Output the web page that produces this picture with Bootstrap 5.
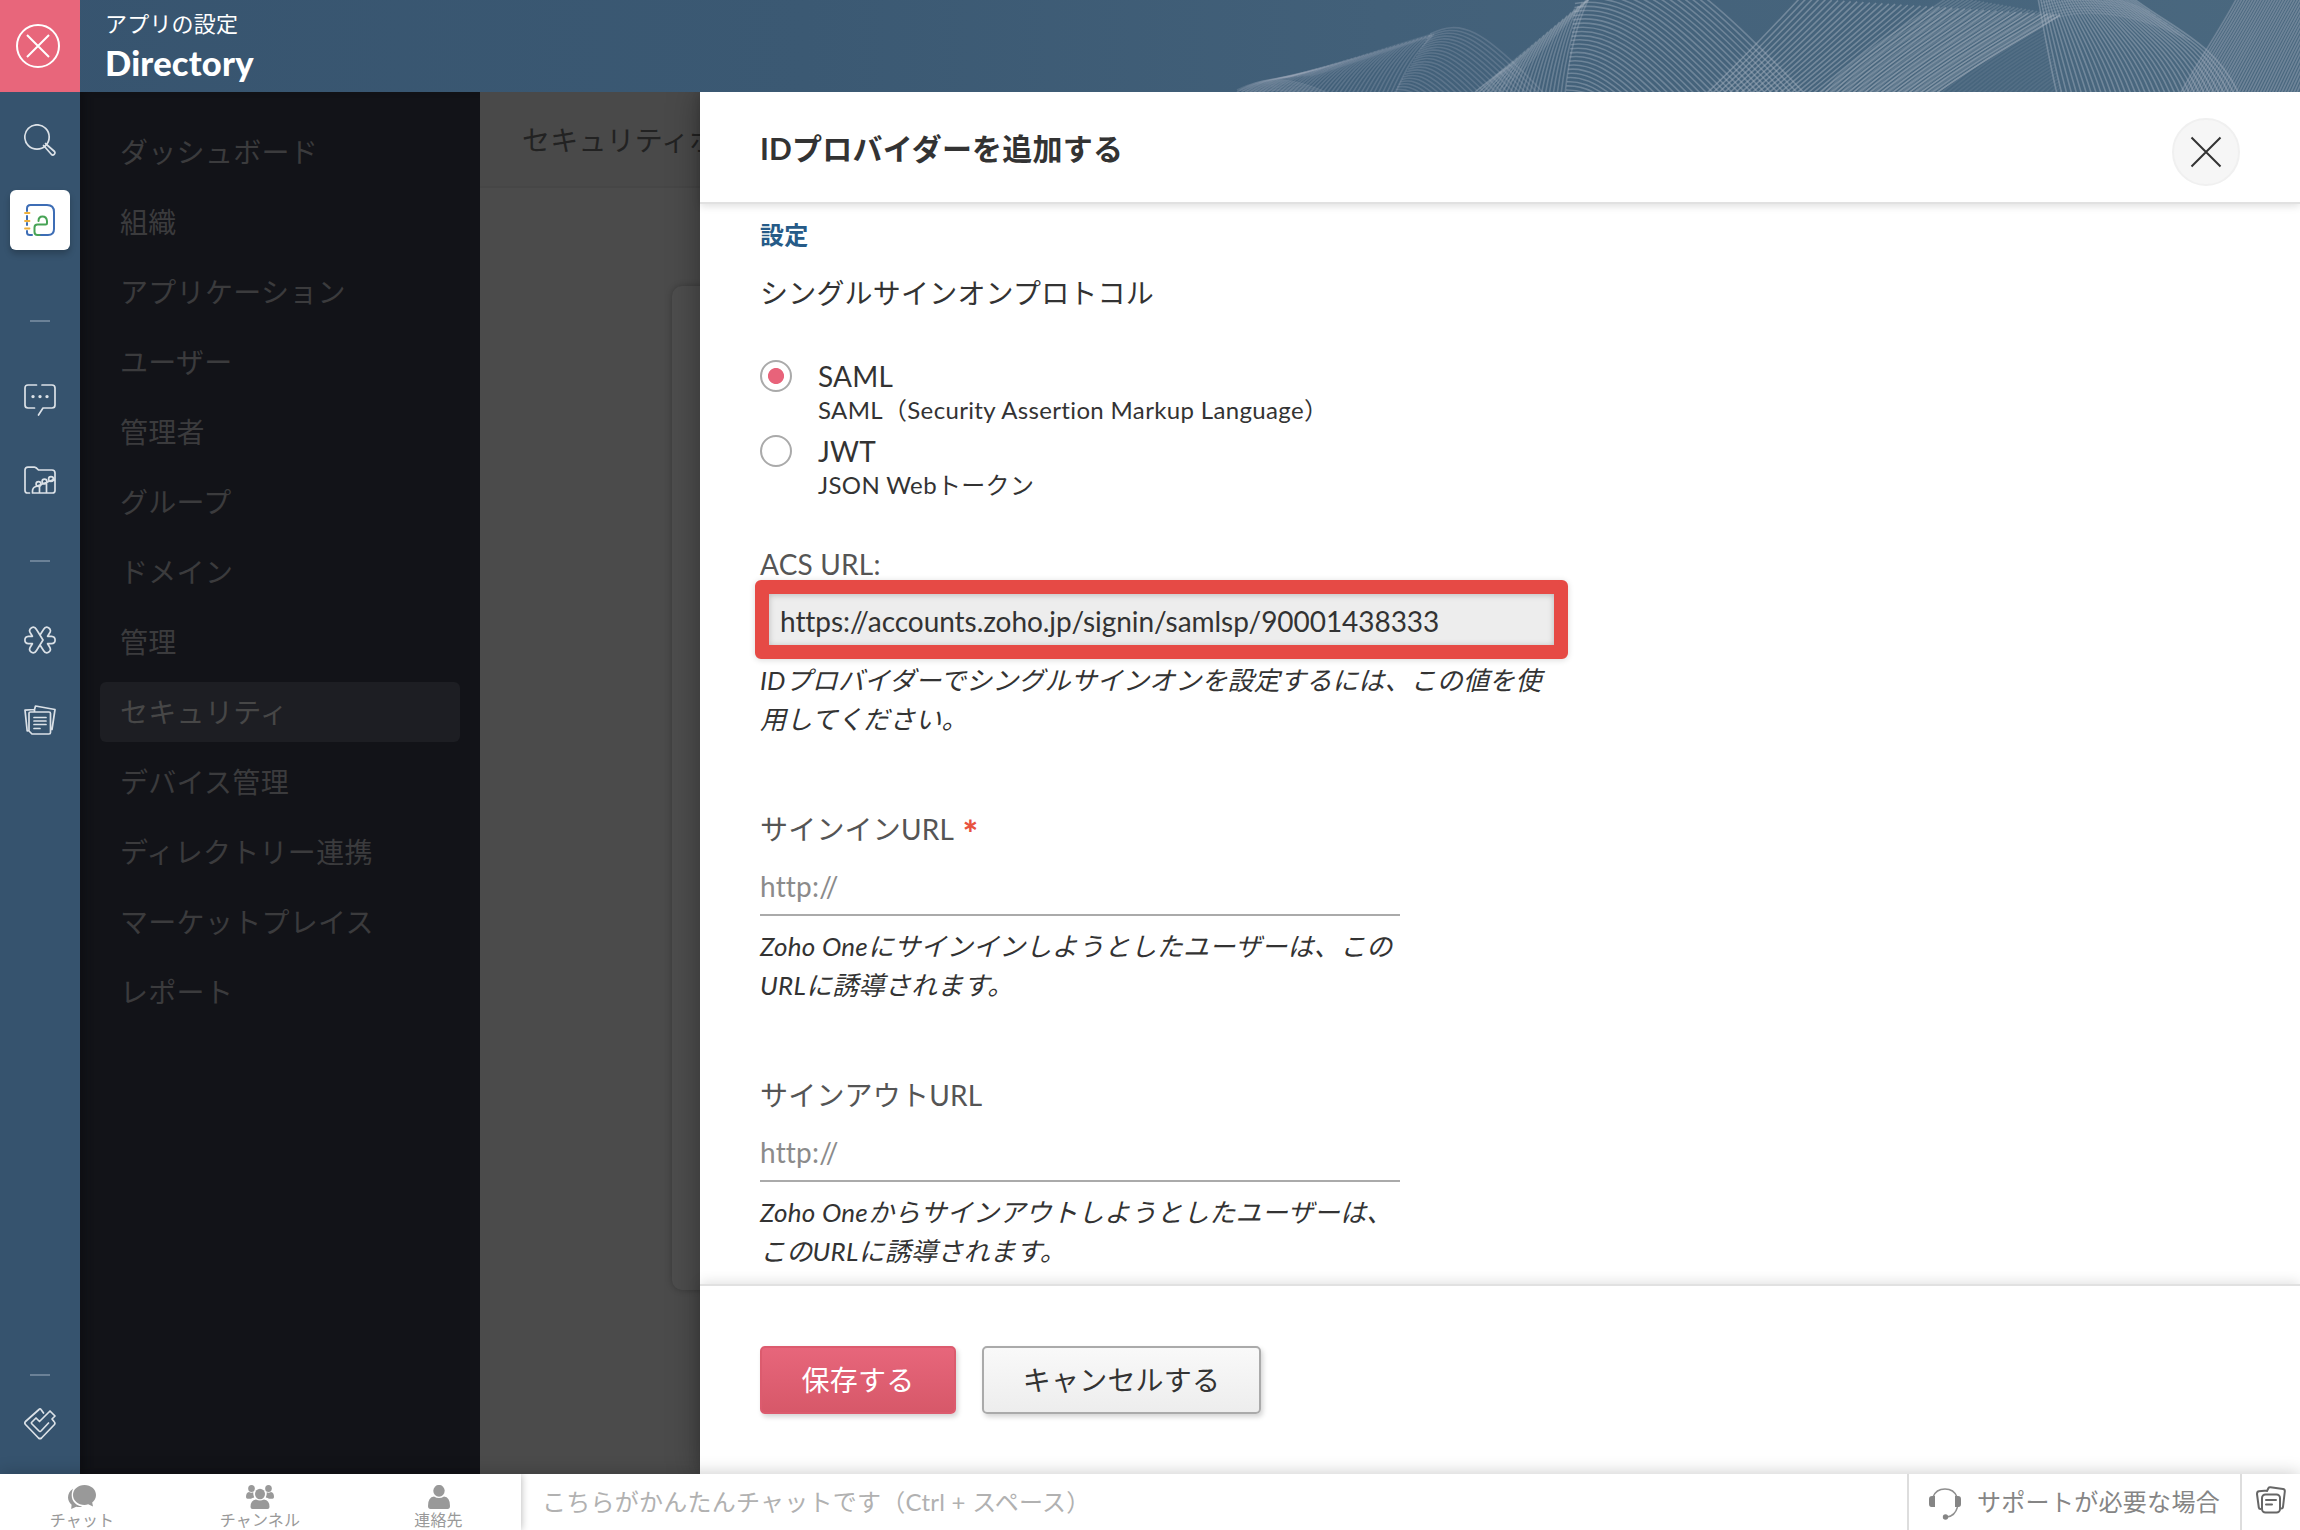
<!DOCTYPE html>
<html lang="ja">
<head>
<meta charset="utf-8">
<meta name="viewport" content="width=device-width, initial-scale=1">
<title>Directory - アプリの設定</title>
<link href="https://cdn.jsdelivr.net/npm/bootstrap@5.3.0/dist/css/bootstrap.min.css" rel="stylesheet">
<style>
  body { font-family: Lato, "Noto Sans CJK JP", sans-serif; font-size: 28px; line-height: 1.5; color: #333; height: 1530px; overflow: hidden; background: #fff; font-variant-ligatures: none; letter-spacing: .2px; }
  input, button { font-family: inherit; letter-spacing: inherit; }
  svg { display: block; flex: none; }

  /* top bar */
  .topbar { height: 92px; background: linear-gradient(90deg, #37546f 0%, #3b5973 35%, #426079 60%, #4a687f 100%); overflow: hidden; position: relative; z-index: 5; }
  .exit-box { width: 80px; height: 92px; background: #e8667b; padding-left: 16px; }
  .app-head { width: 1100px; padding: 8px 0 0 25px; color: #fff; }
  .app-kicker { font-size: 22px; line-height: 31px; }
  .app-name { font-size: 34.5px; font-weight: 900; line-height: 48px; }
  .wave-art { margin-left: auto; }
  .wave-art path { fill: none; }

  /* icon rail */
  .rail { width: 80px; background: #36536e; color: #dbe1e7; flex: none; }
  .rail svg { fill: none; stroke: currentColor; stroke-width: 1.7; stroke-linecap: round; stroke-linejoin: round; }
  .rail-dash { width: 20px; height: 2px; background: #6b8197; flex: none; }
  .app-tile { width: 60px; height: 60px; border-radius: 6px; background: #fff; box-shadow: 0 4px 6px rgba(0,0,0,.22); margin-top: 34px; flex: none; }

  /* side menu */
  .side-menu { width: 400px; background: #121318; padding: 30px 20px 0; flex: none; box-shadow: inset 8px 0 8px -4px #0e0f13; letter-spacing: .3px; }
  .side-menu .nav-link { height: 60px; margin-bottom: 10px; padding: 0 20px; line-height: 61px; border-radius: 6px; color: #3b3b3d; font-size: 28px; }
  .side-menu .nav-link.active { background: #1d1e23; color: #474747; }

  /* dimmed page */
  .dim-page { width: 220px; background: #4b4b4b; flex: none; overflow: hidden; }
  .dim-head { height: 96px; padding-left: 42px; line-height: 97px; color: #222; background: #494949; border-bottom: 2px solid #464646; white-space: nowrap; }
  .dim-card { margin: 98px 0 0 192px; width: 300px; height: 1004px; border-radius: 10px; background: #4d4d4d; box-shadow: 0 0 6px rgba(0,0,0,.25); }

  /* drawer */
  .drawer { background: #fff; box-shadow: 0 0 30px rgba(0,0,0,.35); z-index: 2; }
  .drawer-head { height: 112px; padding: 0 60px; border-bottom: 2px solid #e1e1e1; box-shadow: 0 2px 8px rgba(0,0,0,.13); flex: none; }
  .drawer-title { font-size: 30px; font-weight: 700; line-height: 45px; margin: 2px 0 0; }
  .close-btn { width: 68px; height: 68px; border: 2px solid #f0f0f0; background: #f6f6f6; border-radius: 50%; margin-top: 10px; }
  .drawer-body { padding: 0 60px; overflow: hidden; }
  .section-name { font-size: 24px; font-weight: 700; line-height: 36px; color: #265b88; padding-top: 13px; }
  .proto-label { line-height: 42px; padding-top: 19px; margin-bottom: 46px; }
  .radio-row { height: 75px; gap: 26px; }
  .radio-row .form-check-input { width: 32px; height: 32px; margin: 0; border: 2px solid #aaa; float: none; background-color: #fff; flex: none; box-shadow: none; }
  .radio-row .form-check-input:checked { background: radial-gradient(circle, #e8637a 0 7.6px, #fff 8.4px); }
  .radio-name { line-height: 34px; margin-top: -1px; }
  .radio-note { font-size: 24px; line-height: 34px; letter-spacing: .35px; }
  .field-label { color: #555; line-height: 42px; }
  .req-star { color: #e8523f; font-size: 36px; font-weight: 900; line-height: 0; vertical-align: -7px; margin-left: 2px; }
  .acs-frame { width: 813px; height: 79px; margin: -5px 0 0 -5px; border: 14px solid #e64a45; border-radius: 6px; background: #ededed; box-shadow: 0 1px 6px rgba(0,0,0,.15), inset 0 1px 6px rgba(0,0,0,.22); }
  .acs-frame .form-control-plaintext { padding: 0 11px; height: 51px; font-size: 28px; line-height: 52px; color: #333; letter-spacing: -.05px; }
  .hint-text { font-size: 26px; line-height: 39px; font-style: italic; }
  .acs-hint { margin-top: 2px; letter-spacing: .15px; }
  .line-input { width: 640px; height: 66px; border: 0; border-bottom: 2px solid #aaa; border-radius: 0; padding: 8px 0 0; font-size: 28px; letter-spacing: .2px; }
  .line-input::placeholder { color: #8b8b8b; opacity: 1; }
  .line-input + .hint-text { margin-top: 11px; letter-spacing: .25px; }
  .field-block { padding-top: 69px; height: 266px; }
  .drawer-foot { height: 190px; padding: 60px 60px 0; border-top: 2px solid #e1e1e1; box-shadow: 0 -2px 12px rgba(0,0,0,.12); gap: 26px; flex: none; background: #fff; }
  .save-btn, .cancel-btn { height: 68px; border-radius: 5px; font-size: 28px; line-height: 1; border: 2px solid; box-shadow: 2px 3px 5px rgba(0,0,0,.17); padding: 0; }
  .save-btn { width: 196px; color: #fff; background: linear-gradient(#e7667b, #d75869); border-color: #dc5b6e; }
  .cancel-btn { width: 279px; color: #333; background: linear-gradient(#f9f9f9, #ededed); border-color: #aaa; }

  /* chat bar */
  .chatbar { height: 56px; background: #fff; box-shadow: 0 0 18px rgba(0,0,0,.22); position: relative; z-index: 6; color: #999; }
  .chat-tabs { width: 521px; box-shadow: 0 0 8px rgba(0,0,0,.3); clip-path: inset(0 -10px 0 0); flex: none; }
  .chat-tab { font-size: 16px; line-height: 20px; padding-top: 11px; gap: 1px; }
  .chat-tab svg { fill: #999; }
  .chat-input { font-size: 24px; line-height: 56px; color: #b1b1b1; padding-left: 21px; letter-spacing: .25px; }
  .support-link { width: 333px; font-size: 24px; line-height: 56px; color: #858585; border-left: 2px solid #ddd; padding-left: 20px; gap: 16px; letter-spacing: .3px; }
  .clip-link { width: 60px; border-left: 2px solid #ddd; padding-left: 14px; padding-top: 12px; }
</style>
</head>
<body class="d-flex flex-column">

<header class="topbar d-flex">
  <div class="exit-box d-flex align-items-center">
    <svg width="44" height="44" viewBox="0 0 44 44" fill="none" stroke="#fff" stroke-width="2"><circle cx="22" cy="22" r="21"/><path d="M11 11l22 22M33 11L11 33"/></svg>
  </div>
  <div class="app-head">
    <div class="app-kicker">アプリの設定</div>
    <div class="app-name">Directory</div>
  </div>
  <svg id="waves" class="wave-art" width="1080" height="92" viewBox="1220 0 1080 92"></svg>
</header>

<div class="d-flex flex-grow-1" style="min-height:0">
  <nav class="rail d-flex flex-column align-items-center">
    <svg style="margin-top:32px" width="32" height="32" viewBox="0 0 32 32"><circle cx="13" cy="13" r="12.2"/><path d="M20.5 22.5l7 8c1.800 1.500 4.400-1 3-3l-8-7"/><path d="M22.500 20.500l-1-1M20.500 22.500l-1-1"/></svg>
    <div class="app-tile d-flex align-items-center justify-content-center">
      <svg width="32" height="34" viewBox="0 0 32 34"><g stroke="#3d6db5" stroke-width="2"><path d="M3 8V5.500Q3 2 6.500 2H23Q30 2 30 9V26Q30 32 24 32H16M3 13v3.500M3 20v2M3 28v1.500Q3 32 6 32H8"/></g><path stroke="#47a355" stroke-width="2" d="M14.500 18q0-4.500 4-4.500t4.500 4.500v2q0 1.500-1.500 1.500h-8q-3 0-3 3v4.500q0 3 3 3h2"/><path stroke="#efb13c" stroke-width="1.800" d="M1 10h4.500M1 18h4.500M1 25.500h4.500"/></svg>
    </div>
    <div class="rail-dash" style="margin-top:70px"></div>
    <svg style="margin-top:62px" width="32" height="32" viewBox="0 0 32 32"><path d="M12.500 1H4Q1 1 1 4V21Q1 24 4 24H10.500M18 1H28Q31 1 31 4V21Q31 24 28 24H19L14.500 31"/><path d="M9 12.600h.01M16 12.600h.01M23 12.600h.01" stroke-width="3.400"/></svg>
    <svg style="margin-top:50px" width="32" height="29" viewBox="0 0 32 29"><path d="M5.500 27H3.500Q1 27 1 24.500V4Q1 1.200 4 1.200H10.500Q12 1.200 14.500 4H28Q31 4 31 7V24.500Q31 27 28.500 27H8.500M8.500 27V25Q8.500 21.500 12 20.500L31 13M15.500 27V21M22.500 27V18"/><circle cx="14.500" cy="18" r="2.400"/><circle cx="20.500" cy="15.500" r="2.400"/><circle cx="27" cy="13" r="2.400"/></svg>
    <div class="rail-dash" style="margin-top:65px"></div>
    <svg style="margin-top:64px" width="32" height="28" viewBox="0 0 32 28"><path d="M19 14L12.500 3.500Q10.500 0 7.500 1.700Q4.300 3.800 6.400 7L8.400 10.300H4.500Q.9 10.500.9 14T4.500 17.700H8.400L6.400 21Q4.300 24.300 7.500 26.300Q10.500 28 12.500 24.500L19 14M16 9L19.500 3.500Q21.500 0 24.500 1.700Q27.700 3.800 25.600 7L23.600 10.300H27.500Q31.100 10.500 31.100 14T27.500 17.700H23.600L25.600 21Q27.700 24.300 24.500 26.300Q21.500 28 19.500 24.500L16 19"/></svg>
    <svg style="margin-top:51px" width="32" height="31" viewBox="0 0 32 31"><path d="M5 8Q5 7 6.500 7H25Q26.500 7 26.500 8.500V27.500Q26.500 29 25 29H8L5 26ZM10.500 4.500L11.500 1L31 4.500L28 24.500H26.500M10.500 7V4.500L1 5.200L3.200 26L5 25.500"/><path d="M10 12.500H22M10 16H22M10 19.500H22M10 23.500H16"/></svg>
    <div class="rail-dash mt-auto"></div>
    <svg style="margin:31px 0 34px" width="32" height="33" viewBox="0 0 32 33"><path d="M19.500 6L17 2.500Q16 1 15 2.500L1.500 14.500Q.2 16 1.500 17.500L14.500 31Q16 32.300 17.500 31L30.500 17.500Q31.500 16 30 14.500L28 12L31 9L26 4L15.500 14.500L12 11L7.500 15.500Q7.200 16.200 8 17L15 24Q16 25 17 24L24.500 16"/></svg>
  </nav>

  <nav class="side-menu nav flex-column flex-nowrap">
    <a class="nav-link">ダッシュボード</a>
    <a class="nav-link">組織</a>
    <a class="nav-link">アプリケーション</a>
    <a class="nav-link">ユーザー</a>
    <a class="nav-link">管理者</a>
    <a class="nav-link">グループ</a>
    <a class="nav-link">ドメイン</a>
    <a class="nav-link">管理</a>
    <a class="nav-link active">セキュリティ</a>
    <a class="nav-link">デバイス管理</a>
    <a class="nav-link">ディレクトリー連携</a>
    <a class="nav-link">マーケットプレイス</a>
    <a class="nav-link">レポート</a>
  </nav>

  <section class="dim-page">
    <div class="dim-head">セキュリティポ</div>
    <div class="dim-card"></div>
  </section>

  <main class="drawer d-flex flex-column flex-grow-1">
    <div class="drawer-head d-flex align-items-center justify-content-between">
      <h1 class="drawer-title">IDプロバイダーを追加する</h1>
      <button class="close-btn p-0 d-flex align-items-center justify-content-center" aria-label="閉じる">
        <svg width="32" height="32" viewBox="0 0 32 32" stroke="#333" stroke-width="2"><path d="M1.500 1.500l29 29M30.500 1.500l-29 29"/></svg>
      </button>
    </div>

    <div class="drawer-body flex-grow-1">
      <div class="section-name">設定</div>
      <div class="proto-label">シングルサインオンプロトコル</div>
      <label class="radio-row d-flex">
        <input class="form-check-input" type="radio" name="proto" checked>
        <span><span class="radio-name d-block">SAML</span><span class="radio-note d-block">SAML（Security Assertion Markup Language）</span></span>
      </label>
      <label class="radio-row d-flex">
        <input class="form-check-input" type="radio" name="proto">
        <span><span class="radio-name d-block">JWT</span><span class="radio-note d-block">JSON Webトークン</span></span>
      </label>

      <div class="field-label" style="padding-top:33px">ACS URL:</div>
      <div class="acs-frame"><div class="form-control-plaintext">https://accounts.zoho.jp/signin/samlsp/90001438333</div></div>
      <div class="hint-text acs-hint">IDプロバイダーでシングルサインオンを設定するには、この値を使<br>用してください。</div>

      <div class="field-block">
        <div class="field-label">サインインURL <span class="req-star">*</span></div>
        <input class="form-control line-input shadow-none" placeholder="http://">
        <div class="hint-text">Zoho Oneにサインインしようとしたユーザーは、この<br>URLに誘導されます。</div>
      </div>
      <div class="field-block">
        <div class="field-label">サインアウトURL</div>
        <input class="form-control line-input shadow-none" placeholder="http://">
        <div class="hint-text">Zoho Oneからサインアウトしようとしたユーザーは、<br>このURLに誘導されます。</div>
      </div>
    </div>

    <div class="drawer-foot d-flex">
      <button class="save-btn">保存する</button>
      <button class="cancel-btn">キャンセルする</button>
    </div>
  </main>
</div>

<footer class="chatbar d-flex flex-shrink-0">
  <div class="chat-tabs d-flex">
    <div class="chat-tab d-flex flex-column align-items-center" style="width:164px">
      <svg width="28" height="24" viewBox="0 0 28 24"><path d="M16.500 0C22.800 0 28 4.300 28 10c0 3-1.500 5.800-3.800 7.600l.8 4-4.800-2.300c-1.200.4-2.400.6-3.700.6C10 19.900 5 15.600 5 10S10 0 16.500 0Z"/><path d="M5 3.800C1.800 5.800 0 9 0 12.500c0 2.800 1.500 5.300 3.600 7.200L3.200 24l5-2.300c2 .5 4.300.5 6-.2C8 20.800 3.700 16 3.700 10.500c0-2.500.4-4.500 1.300-6.700Z"/></svg>
      <span>チャット</span>
    </div>
    <div class="chat-tab d-flex flex-column align-items-center" style="width:192px">
      <svg width="28" height="24" viewBox="0 0 28 24"><ellipse cx="14" cy="9" rx="5" ry="5.200"/><ellipse cx="5.500" cy="3.500" rx="3.300" ry="3.500"/><ellipse cx="22.500" cy="3.500" rx="3.300" ry="3.500"/><path d="M4.500 22q0-7 5.500-7.500 4 2 8 0 5.500.5 5.500 7.500 0 2-2 2h-15q-2 0-2-2ZM0 12q0-4.500 3-5 2 1.200 4.300.3Q7 10 8.200 12.500q-2 .5-3.200 1.300H1.500Q0 13.800 0 12ZM28 12q0-4.500-3-5-2 1.200-4.300.3.300 2.700-.9 5.200 2 .5 3.200 1.300h3.500Q28 13.800 28 12Z"/></svg>
      <span>チャンネル</span>
    </div>
    <div class="chat-tab d-flex flex-column align-items-center" style="width:165px">
      <svg width="24" height="24" viewBox="0 0 24 24"><ellipse cx="12" cy="5.800" rx="5.700" ry="5.900"/><path d="M1 21q0-9 6-9.500 5 3 10 0 6 .5 6 9.500 0 3-2.500 3h-17Q1 24 1 21Z"/></svg>
      <span>連絡先</span>
    </div>
  </div>
  <div class="chat-input flex-grow-1">こちらがかんたんチャットです（Ctrl + スペース）</div>
  <div class="support-link d-flex align-items-center">
    <svg class="mt-1" width="32" height="32" viewBox="0 0 32 32"><path d="M4 9Q7 1 16 1T28 9M28.500 19Q26 28 18 29" fill="none" stroke="#8f8f8f" stroke-width="1.500"/><path d="M6 8v11H2.500Q0 19 0 16v-5Q0 8 3 8ZM26 8v11h3.500q2.500 0 2.500-3v-5q0-3-3-3Z" fill="#858585"/><circle cx="16.500" cy="29" r="2.700" fill="#858585"/></svg>
    <span>サポートが必要な場合</span>
  </div>
  <div class="clip-link">
    <svg width="30" height="29" viewBox="0 0 30 29" fill="none" stroke="#666" stroke-width="2" stroke-linejoin="round" stroke-linecap="round"><rect x="6" y="8.500" width="18" height="18" rx="3.500"/><path d="M10 14H20M10 18.500H16M4.500 23Q3 23 2.800 21.500L1 8Q1 5.500 3 5.300L11 4.500M11 5L12.500 2Q13 1 14.500 1.200L27 3Q29 3.300 28.800 5.500L27 21Q26.700 22.500 25.500 22.500"/></svg>
  </div>
</footer>

<script src="https://cdn.jsdelivr.net/npm/bootstrap@5.3.0/dist/js/bootstrap.bundle.min.js"></script>
<script>
  // Each ribbon is a set of cubic curves blended from a first curve to a last one.
  const ribbons = [
    { a: [1237,92, 1255,81, 1270,79, 1290,77], b: [1395,94, 1405,70, 1415,52, 1434,34], n: 38, o: .24 },
    { a: [1290,77, 1340,64, 1390,46, 1432,34], b: [1310,76, 1350,64, 1395,48, 1432,36], n: 4, o: .12 },
    { a: [1430,34, 1460,20, 1480,24, 1550,100], b: [1394,92, 1400,92, 1406,93, 1412,95], n: 24, o: .24 },
    { a: [1237,90, 1265,76, 1290,76, 1330,94], b: [1255,94, 1270,88, 1285,90, 1300,95], n: 8, o: .2 },
    { a: [1475,92, 1485,84, 1493,78, 1502,71], b: [1565,94, 1568,65, 1574,28, 1590,-4], n: 24, o: .36 },
    { a: [1475,92, 1515,60, 1550,30, 1590,-2], b: [1500,92, 1530,64, 1560,30, 1590,-2], n: 7, o: .16 },
    { a: [1580,-46, 1650,-60, 1710,-6, 1806,95], b: [1566,90, 1575,90, 1585,92, 1592,95], n: 34, o: .42 },
    { a: [1706,94, 1740,62, 1770,30, 1800,-2], b: [1935,94, 1985,58, 2020,40, 2060,15], n: 42, o: .46 },
    { a: [1820,94, 1860,50, 1900,30, 1950,-4], b: [1935,94, 1985,58, 2020,40, 2060,15], n: 30, o: .26 },
    { a: [1940,94, 1975,65, 2010,42, 2042,24], b: [2060,94, 2060,92, 2061,91, 2062,90], n: 24, o: .12 },
    { a: [2038,-2, 2044,30, 2050,65, 2057,94], b: [2130,-4, 2175,30, 2215,42, 2240,96], n: 38, o: .42 },
    { a: [2045,22, 2070,10, 2120,5, 2190,40], b: [2040,0, 2070,-8, 2110,-8, 2150,12], n: 8, o: .2 },
    { a: [2180,94, 2200,58, 2220,30, 2238,-4], b: [2330,94, 2345,58, 2355,30, 2375,-4], n: 50, o: .38 }
  ];
  const svg = document.getElementById('waves');
  for (const r of ribbons) {
    for (let i = 0; i < r.n; i++) {
      const t = i / (r.n - 1);
      const p = r.a.map((v, k) => (v + (r.b[k] - v) * t).toFixed(1));
      const path = document.createElementNS('http://www.w3.org/2000/svg', 'path');
      path.setAttribute('d', `M${p[0]} ${p[1]}C${p[2]} ${p[3]} ${p[4]} ${p[5]} ${p[6]} ${p[7]}`);
      path.setAttribute('stroke', `rgba(170,180,195,${r.o})`);
      path.setAttribute('stroke-width', '1.6');
      svg.appendChild(path);
    }
  }
</script>
</body>
</html>
